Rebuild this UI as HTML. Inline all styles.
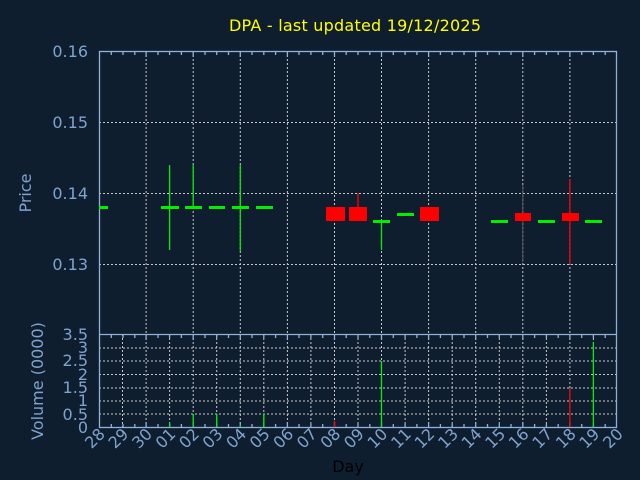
<!DOCTYPE html><html><head><style>body{margin:0;background:#0f1e2f}svg{display:block;font-family:"DejaVu Sans",sans-serif}</style></head><body>
<svg width="640" height="480" viewBox="0 0 640 480">
<rect width="640" height="480" fill="#0f1e2f"/>
<text x="355" y="31" fill="#ffff00" font-size="16" text-anchor="middle" textLength="252">DPA - last updated 19/12/2025</text>
<g stroke="#c8c8c8" stroke-dasharray="2,2" stroke-width="1">
<line x1="146.1" y1="51" x2="146.1" y2="334"/><line x1="193.2" y1="51" x2="193.2" y2="334"/><line x1="240.3" y1="51" x2="240.3" y2="334"/><line x1="287.4" y1="51" x2="287.4" y2="334"/><line x1="334.5" y1="51" x2="334.5" y2="334"/><line x1="381.5" y1="51" x2="381.5" y2="334"/><line x1="428.6" y1="51" x2="428.6" y2="334"/><line x1="475.7" y1="51" x2="475.7" y2="334"/><line x1="522.8" y1="51" x2="522.8" y2="334"/><line x1="569.9" y1="51" x2="569.9" y2="334"/>
<line x1="99" y1="122.5" x2="617" y2="122.5"/><line x1="99" y1="193.5" x2="617" y2="193.5"/><line x1="99" y1="264.5" x2="617" y2="264.5"/>
<line x1="122.5" y1="334" x2="122.5" y2="427"/><line x1="146.1" y1="334" x2="146.1" y2="427"/><line x1="169.6" y1="334" x2="169.6" y2="427"/><line x1="193.2" y1="334" x2="193.2" y2="427"/><line x1="216.7" y1="334" x2="216.7" y2="427"/><line x1="240.3" y1="334" x2="240.3" y2="427"/><line x1="263.8" y1="334" x2="263.8" y2="427"/><line x1="287.4" y1="334" x2="287.4" y2="427"/><line x1="310.9" y1="334" x2="310.9" y2="427"/><line x1="334.5" y1="334" x2="334.5" y2="427"/><line x1="358" y1="334" x2="358" y2="427"/><line x1="381.5" y1="334" x2="381.5" y2="427"/><line x1="405.1" y1="334" x2="405.1" y2="427"/><line x1="428.6" y1="334" x2="428.6" y2="427"/><line x1="452.2" y1="334" x2="452.2" y2="427"/><line x1="475.7" y1="334" x2="475.7" y2="427"/><line x1="499.3" y1="334" x2="499.3" y2="427"/><line x1="522.8" y1="334" x2="522.8" y2="427"/><line x1="546.4" y1="334" x2="546.4" y2="427"/><line x1="569.9" y1="334" x2="569.9" y2="427"/><line x1="593.4" y1="334" x2="593.4" y2="427"/>
<line x1="99" y1="348" x2="617" y2="348"/><line x1="99" y1="361" x2="617" y2="361"/><line x1="99" y1="374.5" x2="617" y2="374.5"/><line x1="99" y1="388" x2="617" y2="388"/><line x1="99" y1="401" x2="617" y2="401"/><line x1="99" y1="414" x2="617" y2="414"/>
</g>
<g fill="none" stroke="#8fb0d8" stroke-width="1.3">
<rect x="99.5" y="51.5" width="517" height="376"/>
<line x1="99" y1="334.5" x2="617" y2="334.5"/>
<path d="M111.3 52v3M123 52v3M134.8 52v3M146.1 52v5M158 52v3M169.6 52v3M181.4 52v3M193.2 52v5M205 52v3M216.7 52v3M228.5 52v3M240.3 52v5M252 52v3M263.8 52v3M275.6 52v3M287.4 52v5M299 52v3M310.9 52v3M322.7 52v3M334.5 52v5M346.2 52v3M358 52v3M369.8 52v3M381.5 52v5M393.3 52v3M405.1 52v3M416.9 52v3M428.6 52v5M440.4 52v3M452.2 52v3M464 52v3M475.7 52v5M487.5 52v3M499.3 52v3M511 52v3M522.8 52v5M534.6 52v3M546.4 52v3M558.2 52v3M569.9 52v5M581.7 52v3M593.4 52v3M605.2 52v3"/>
<path d="M111.3 335v3M123 335v3M134.8 335v3M146.1 335v5M158 335v3M169.6 335v3M181.4 335v3M193.2 335v5M205 335v3M216.7 335v3M228.5 335v3M240.3 335v5M252 335v3M263.8 335v3M275.6 335v3M287.4 335v5M299 335v3M310.9 335v3M322.7 335v3M334.5 335v5M346.2 335v3M358 335v3M369.8 335v3M381.5 335v5M393.3 335v3M405.1 335v3M416.9 335v3M428.6 335v5M440.4 335v3M452.2 335v3M464 335v3M475.7 335v5M487.5 335v3M499.3 335v3M511 335v3M522.8 335v5M534.6 335v3M546.4 335v3M558.2 335v3M569.9 335v5M581.7 335v3M593.4 335v3M605.2 335v3"/>
<path d="M111.3 427v-3M123 427v-3M134.8 427v-3M146.1 427v-5M158 427v-3M169.6 427v-3M181.4 427v-3M193.2 427v-5M205 427v-3M216.7 427v-3M228.5 427v-3M240.3 427v-5M252 427v-3M263.8 427v-3M275.6 427v-3M287.4 427v-5M299 427v-3M310.9 427v-3M322.7 427v-3M334.5 427v-5M346.2 427v-3M358 427v-3M369.8 427v-3M381.5 427v-5M393.3 427v-3M405.1 427v-3M416.9 427v-3M428.6 427v-5M440.4 427v-3M452.2 427v-3M464 427v-3M475.7 427v-5M487.5 427v-3M499.3 427v-3M511 427v-3M522.8 427v-5M534.6 427v-3M546.4 427v-3M558.2 427v-3M569.9 427v-5M581.7 427v-3M593.4 427v-3M605.2 427v-3"/>
</g>
<g stroke="#00ee00" stroke-width="1.3">
<line x1="169.6" y1="165" x2="169.6" y2="250"/><line x1="193.2" y1="165" x2="193.2" y2="207"/><line x1="240.3" y1="165" x2="240.3" y2="251"/><line x1="381.5" y1="221" x2="381.5" y2="250"/>
</g>
<g fill="#00ee00">
<rect x="99" y="206" width="9" height="3"/><rect x="161" y="206" width="18" height="3"/><rect x="185" y="206" width="17" height="3"/><rect x="209" y="206" width="16" height="3"/><rect x="232" y="206" width="17" height="3"/><rect x="256" y="206" width="17" height="3"/>
<rect x="373" y="220" width="17" height="3"/><rect x="397" y="213" width="17" height="3"/><rect x="491" y="220" width="17" height="3"/><rect x="538" y="220" width="17" height="3"/><rect x="585" y="220" width="17" height="3"/>
</g>
<g stroke="#ff0000" stroke-width="1.3"><line x1="358" y1="193" x2="358" y2="207"/><line x1="569.9" y1="179" x2="569.9" y2="264"/><line x1="522.8" y1="185" x2="522.8" y2="262" stroke="#555" stroke-width="1"/></g>
<g fill="#ff0000">
<rect x="326" y="207" width="19" height="14"/><rect x="349" y="207" width="18" height="14"/><rect x="420" y="207" width="19" height="14"/><rect x="515" y="213" width="16" height="8"/><rect x="562" y="213" width="17" height="8"/>
</g>
<g stroke="#00ee00" stroke-width="1.3">
<line x1="169.6" y1="423" x2="169.6" y2="427"/><line x1="193.2" y1="414" x2="193.2" y2="427"/><line x1="216.7" y1="414" x2="216.7" y2="427"/><line x1="240.3" y1="425" x2="240.3" y2="427"/><line x1="263.8" y1="414" x2="263.8" y2="427"/><line x1="381.5" y1="361" x2="381.5" y2="427"/><line x1="593.4" y1="342" x2="593.4" y2="427"/>
</g>
<g stroke="#ff0000" stroke-width="1.3"><line x1="334.5" y1="421" x2="334.5" y2="427"/><line x1="569.9" y1="388" x2="569.9" y2="427"/></g>
<g fill="#7fa3cf" font-size="16" text-anchor="end">
<text x="88" y="57">0.16</text><text x="88" y="128">0.15</text><text x="88" y="199">0.14</text><text x="88" y="270">0.13</text>
<text x="88" y="340">3.5</text><text x="88" y="353">3</text><text x="88" y="366">2.5</text><text x="88" y="380">2</text><text x="88" y="393">1.5</text><text x="88" y="406">1</text><text x="88" y="420">0.5</text><text x="88" y="433">0</text>
</g>
<text transform="translate(31,193) rotate(-90)" fill="#7fa3cf" font-size="16" text-anchor="middle">Price</text>
<text transform="translate(43,381) rotate(-90)" fill="#7fa3cf" font-size="16" text-anchor="middle">Volume (0000)</text>
<g fill="#7fa3cf" font-size="16" text-anchor="end">
<text transform="translate(106,435) rotate(-45)">28</text><text transform="translate(129.5,435) rotate(-45)">29</text><text transform="translate(153.1,435) rotate(-45)">30</text><text transform="translate(176.6,435) rotate(-45)">01</text><text transform="translate(200.2,435) rotate(-45)">02</text><text transform="translate(223.7,435) rotate(-45)">03</text><text transform="translate(247.3,435) rotate(-45)">04</text><text transform="translate(270.8,435) rotate(-45)">05</text><text transform="translate(294.4,435) rotate(-45)">06</text><text transform="translate(317.9,435) rotate(-45)">07</text><text transform="translate(341.5,435) rotate(-45)">08</text><text transform="translate(365,435) rotate(-45)">09</text><text transform="translate(388.5,435) rotate(-45)">10</text><text transform="translate(412.1,435) rotate(-45)">11</text><text transform="translate(435.6,435) rotate(-45)">12</text><text transform="translate(459.2,435) rotate(-45)">13</text><text transform="translate(482.7,435) rotate(-45)">14</text><text transform="translate(506.3,435) rotate(-45)">15</text><text transform="translate(529.8,435) rotate(-45)">16</text><text transform="translate(553.4,435) rotate(-45)">17</text><text transform="translate(576.9,435) rotate(-45)">18</text><text transform="translate(600.4,435) rotate(-45)">19</text><text transform="translate(624,435) rotate(-45)">20</text>
</g>
<text x="348" y="472" fill="#000" font-size="16" text-anchor="middle">Day</text>
</svg>
</body></html>
